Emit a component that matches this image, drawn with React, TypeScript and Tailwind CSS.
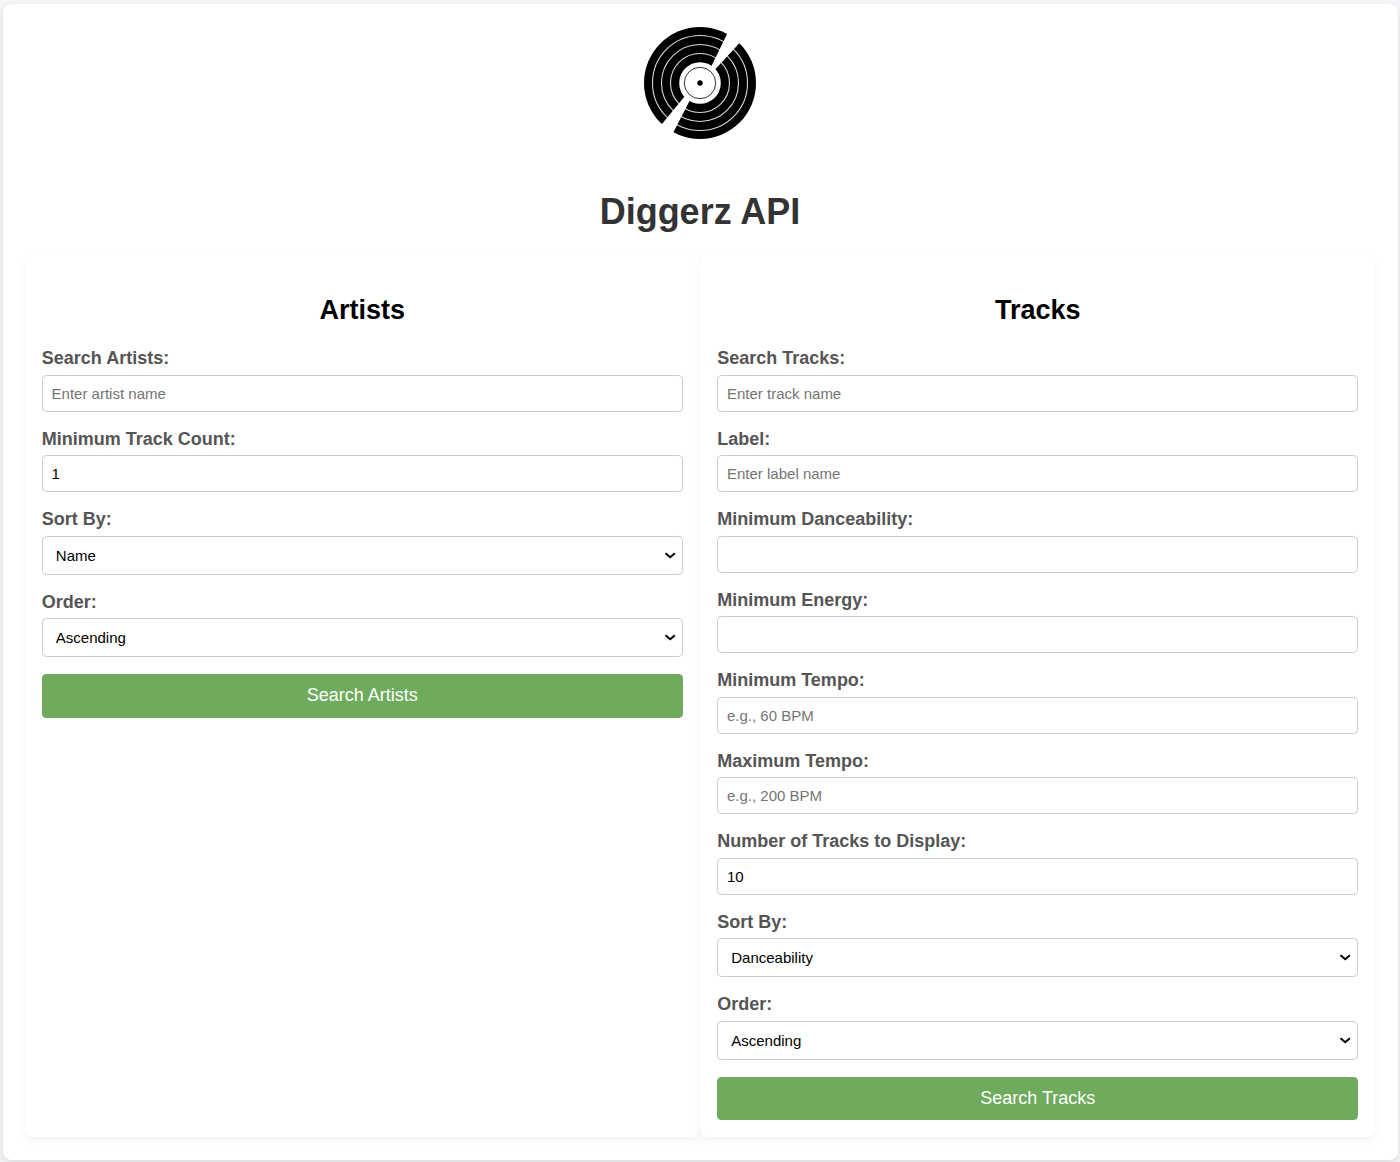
import { useId } from "react";

function Logo() {
  return (
    <svg className="h-28 w-28" viewBox="0 0 112 112" role="img" aria-label="Diggerz logo">
      <circle cx="56" cy="56" r="56" fill="#000" />
      <g fill="none" stroke="#fff" strokeOpacity="0.85" strokeWidth="1.1">
        <circle cx="56" cy="56" r="47.5" />
        <circle cx="56" cy="56" r="38.5" />
        <circle cx="56" cy="56" r="29.5" />
      </g>
      <path d="M84 5 L67 40 L71 42.5 L95.5 16 L100 0 Z" fill="#fff" />
      <path d="M28.5 107 L46 73 L41 69 L17.5 97.5 L12 112 Z" fill="#fff" />
      <circle cx="56" cy="56" r="20.8" fill="#fff" />
      <circle cx="56" cy="56" r="15.7" fill="none" stroke="#000" strokeWidth="0.8" />
      <circle cx="56" cy="56" r="2.7" fill="#000" />
    </svg>
  );
}

type FieldProps = {
  label: string;
  placeholder?: string;
  value?: string;
  options?: string[];
};

function Field({ label, placeholder, value, options }: FieldProps) {
  const id = useId();
  return (
    <div className="mb-[16.5px]">
      <label htmlFor={id} className="block h-[27px] pt-[0.35px] text-[18px] leading-[20px] font-bold text-[#555]">
        {label}
      </label>
      {options ? (
        <div className="relative">
          <select
            id={id}
            className="block h-[39px] w-full appearance-none rounded-[4.4px] border border-[#ccc] bg-white pr-8 pl-[13px] text-[15px] leading-[17px] text-black"
          >
            {options.map((o) => (
              <option key={o}>{o}</option>
            ))}
          </select>
          <svg
            className="pointer-events-none absolute top-[16px] right-[7px] h-[8px] w-[12px]"
            viewBox="0 0 12 8"
            fill="none"
            stroke="#000"
            strokeWidth="2"
          >
            <path d="M1.5 1.2 L6.2 5.2 L10.9 1.2" />
          </svg>
        </div>
      ) : (
        <input
          id={id}
          placeholder={placeholder}
          defaultValue={value}
          className="block h-[37px] w-full rounded-[4.4px] border border-[#ccc] bg-white px-[8.8px] pt-[0.2px] text-[15px] text-black placeholder:text-[#757575]"
        />
      )}
    </div>
  );
}

function Panel({ title, fields, action }: { title: string; fields: FieldProps[]; action: string }) {
  return (
    <section className="flex-1 rounded-[8.8px] bg-white px-[16.8px] pt-[39.2px] pb-[16px] shadow-[0_4px_9px_rgba(0,0,0,0.05)]">
      <h2 className="mb-[21.6px] text-center text-[27px] leading-[32px] font-bold text-black">{title}</h2>
      {fields.map((f) => (
        <Field key={f.label} {...f} />
      ))}
      <button
        type="button"
        className="mt-[16.8px] block h-[43.5px] w-full rounded-[4.4px] bg-[#6eab5c] pb-[1px] text-[18px] leading-[20px] text-white"
      >
        {action}
      </button>
    </section>
  );
}

const artistFields: FieldProps[] = [
  { label: "Search Artists:", placeholder: "Enter artist name" },
  { label: "Minimum Track Count:", value: "1" },
  { label: "Sort By:", options: ["Name", "Track Count"] },
  { label: "Order:", options: ["Ascending", "Descending"] },
];

const trackFields: FieldProps[] = [
  { label: "Search Tracks:", placeholder: "Enter track name" },
  { label: "Label:", placeholder: "Enter label name" },
  { label: "Minimum Danceability:" },
  { label: "Minimum Energy:" },
  { label: "Minimum Tempo:", placeholder: "e.g., 60 BPM" },
  { label: "Maximum Tempo:", placeholder: "e.g., 200 BPM" },
  { label: "Number of Tracks to Display:", value: "10" },
  { label: "Sort By:", options: ["Danceability", "Energy", "Tempo"] },
  { label: "Order:", options: ["Ascending", "Descending"] },
];

export default function App() {
  return (
    <div className="h-[1162px] overflow-hidden bg-[#f4f4f9] pt-1 pr-[2px] pl-[3px] font-['Liberation_Sans',Arial,sans-serif]">
      <main className="h-[1156px] rounded-[8.8px] bg-white pt-[23px] pr-[23px] pl-[22px] shadow-[0_4px_9px_rgba(0,0,0,0.1)]">
        <header className="flex flex-col items-center">
          <Logo />
          <h1 className="mt-[52px] text-[36px] leading-[42px] font-bold text-[#333]">Diggerz API</h1>
        </header>
        <div className="mt-[22px] flex h-[882px] gap-[0.8px]">
          <Panel title="Artists" fields={artistFields} action="Search Artists" />
          <Panel title="Tracks" fields={trackFields} action="Search Tracks" />
        </div>
      </main>
    </div>
  );
}
